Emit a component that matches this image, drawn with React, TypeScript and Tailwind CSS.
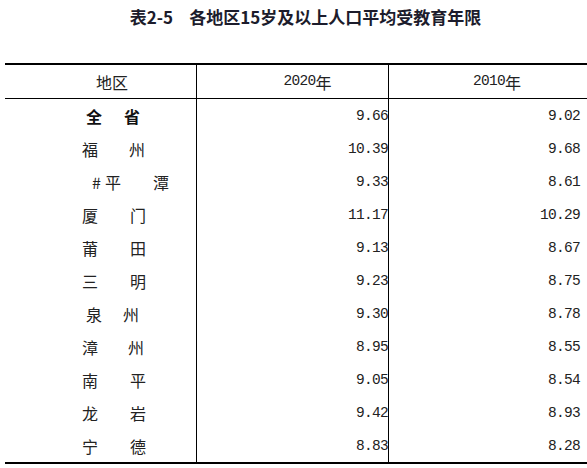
import React from "react";

type Row = {
  name: React.ReactNode;
  cls: string;
  v20: string;
  v10: string;
};

const cjk = { fontFamily: '"Noto Sans CJK SC", "Noto Sans", sans-serif' };
const mono = { fontFamily: '"Liberation Mono", "DejaVu Sans Mono", monospace' };

function Pair({ a, b }: { a: string; b: string }) {
  return (
    <>
      <span className="w-[16px] text-center">{a}</span>
      <span className="w-[16px] text-center">{b}</span>
    </>
  );
}

const rows: Row[] = [
  { name: <Pair a="全" b="省" />, cls: "pl-[81px] gap-[22px] font-bold text-[#111]", v20: "9.66", v10: "9.02" },
  { name: <Pair a="福" b="州" />, cls: "pl-[77px] gap-[31px]", v20: "10.39", v10: "9.68" },
  {
    name: (
      <>
        <span className="w-[13px] text-left">#</span>
        <span className="w-[16px] text-center">平</span>
        <span className="ml-[32px] w-[16px] text-center">潭</span>
      </>
    ),
    cls: "pl-[87px]",
    v20: "9.33",
    v10: "8.61",
  },
  { name: <Pair a="厦" b="门" />, cls: "pl-[77px] gap-[32px]", v20: "11.17", v10: "10.29" },
  { name: <Pair a="莆" b="田" />, cls: "pl-[77px] gap-[32px]", v20: "9.13", v10: "8.67" },
  { name: <Pair a="三" b="明" />, cls: "pl-[77px] gap-[32px]", v20: "9.23", v10: "8.75" },
  { name: <Pair a="泉" b="州" />, cls: "pl-[81px] gap-[21px]", v20: "9.30", v10: "8.78" },
  { name: <Pair a="漳" b="州" />, cls: "pl-[77px] gap-[30px]", v20: "8.95", v10: "8.55" },
  { name: <Pair a="南" b="平" />, cls: "pl-[77px] gap-[32px]", v20: "9.05", v10: "8.54" },
  { name: <Pair a="龙" b="岩" />, cls: "pl-[77px] gap-[32px]", v20: "9.42", v10: "8.93" },
  { name: <Pair a="宁" b="德" />, cls: "pl-[77px] gap-[32px]", v20: "8.83", v10: "8.28" },
];

export default function App() {
  return (
    <div className="w-[587px] h-[468px] bg-white overflow-hidden text-[#222]" style={cjk}>
      <div className="h-[30px] pt-[4px] flex justify-center items-center pl-[24px] text-[17px] font-bold leading-[22px] text-[#1c1c2c]">
        <span>表2-5</span>
        <span className="ml-[16px]">各地区15岁及以上人口平均受教育年限</span>
      </div>
      <div className="mt-[33px] ml-[5px] border-t-2 border-b-2 border-black">
        <div className="grid grid-cols-[192px_192px_198px] h-[34px] border-b border-black">
          <div className="border-r border-black flex items-center justify-center pl-[23px] text-[16px]">
            地区
          </div>
          <div className="border-r border-black flex items-center justify-center pl-[30px]">
            <span className="text-[14.5px] tracking-[-0.7px]" style={mono}>2020</span>
            <span className="text-[16px]">年</span>
          </div>
          <div className="flex items-center justify-center pl-[18px]">
            <span className="text-[14.5px] tracking-[-0.7px]" style={mono}>2010</span>
            <span className="text-[16px]">年</span>
          </div>
        </div>
        {rows.map((r, i) => (
          <div key={i} className="grid grid-cols-[192px_192px_198px] h-[33px]">
            <div className={`border-r border-black flex items-center text-[16px] ${r.cls}`}>{r.name}</div>
            <div
              className="border-r border-black flex items-center justify-end pr-0 pt-[3px] text-[14.5px] tracking-[-0.7px]"
              style={mono}
            >
              {r.v20}
            </div>
            <div className="flex items-center justify-end pr-[7px] pt-[3px] text-[14.5px] tracking-[-0.7px]" style={mono}>
              {r.v10}
            </div>
          </div>
        ))}
      </div>
    </div>
  );
}
